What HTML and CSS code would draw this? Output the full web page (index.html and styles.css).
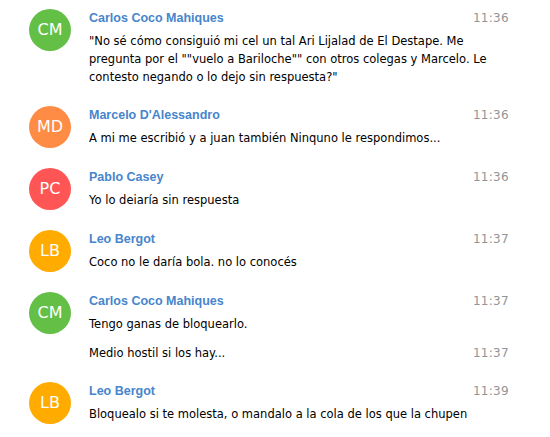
FILE: index.html
```html
<!DOCTYPE html>
<html lang="es">
<head>
    <meta charset="UTF-8">
    <meta name="viewport" content="width=device-width, initial-scale=1.0">
    <title>Mensajes</title>
    <link rel="stylesheet" href="styles.css">
</head>
<body>
    <div class="history">

        <div class="message">
            <div class="userpic userpic-green">CM</div>
            <div class="body">
                <div class="head">
                    <div class="from-name">Carlos Coco Mahiques</div>
                    <div class="details">11:36</div>
                </div>
                <div class="text">"No sé cómo consiguió mi cel un tal Ari Lijalad de El Destape. Me pregunta por el ""vuelo a Bariloche"" con otros colegas y Marcelo. Le contesto negando o lo dejo sin respuesta?"</div>
            </div>
        </div>

        <div class="message">
            <div class="userpic userpic-orange">MD</div>
            <div class="body">
                <div class="head">
                    <div class="from-name">Marcelo D'Alessandro</div>
                    <div class="details">11:36</div>
                </div>
                <div class="text">A mi me escribió y a juan también Ninquno le respondimos...</div>
            </div>
        </div>

        <div class="message">
            <div class="userpic userpic-red">PC</div>
            <div class="body">
                <div class="head">
                    <div class="from-name">Pablo Casey</div>
                    <div class="details">11:36</div>
                </div>
                <div class="text">Yo lo deiaría sin respuesta</div>
            </div>
        </div>

        <div class="message">
            <div class="userpic userpic-yellow">LB</div>
            <div class="body">
                <div class="head">
                    <div class="from-name">Leo Bergot</div>
                    <div class="details">11:37</div>
                </div>
                <div class="text">Coco no le daría bola. no lo conocés</div>
            </div>
        </div>

        <div class="message">
            <div class="userpic userpic-green">CM</div>
            <div class="body">
                <div class="head">
                    <div class="from-name">Carlos Coco Mahiques</div>
                    <div class="details">11:37</div>
                </div>
                <div class="text">Tengo ganas de bloquearlo.</div>
            </div>
        </div>

        <div class="message joined">
            <div class="body">
                <div class="head">
                    <div class="text">Medio hostil si los hay...</div>
                    <div class="details">11:37</div>
                </div>
            </div>
        </div>

        <div class="message">
            <div class="userpic userpic-yellow">LB</div>
            <div class="body">
                <div class="head">
                    <div class="from-name">Leo Bergot</div>
                    <div class="details">11:39</div>
                </div>
                <div class="text">Bloquealo si te molesta, o mandalo a la cola de los que la chupen</div>
            </div>
        </div>

    </div>
</body>
</html>
```

FILE: styles.css
```css
html {
    background-color: #fff;
    color: #000;
    font-family: "DejaVu Sans", "Liberation Sans", sans-serif;
    font-size: 11.5px;
    line-height: 18px;
}

body {
    margin: 0;
    padding: 0;
}

.history {
    margin-top: -1px;
    padding: 0 15px 0 29px;
}

.message {
    display: flex;
    flex-direction: row;
    padding: 10px 0 10px;
}

.message.joined {
    margin-top: -10px;
    padding-left: 60px;
}

.userpic {
    flex: none;
    width: 42px;
    height: 42px;
    border-radius: 50%;
    color: #fff;
    font-size: 16px;
    line-height: 42px;
    text-align: center;
}

.userpic-green {
    background-color: #64bf47;
}

.userpic-orange {
    background-color: #ff8c44;
}

.userpic-red {
    background-color: #ff5555;
}

.userpic-yellow {
    background-color: #ffab00;
}

.body {
    flex: 1;
    min-width: 0;
    margin-left: 18px;
}

.joined .body {
    margin-left: 0;
}

.head {
    display: flex;
    justify-content: space-between;
}

.from-name {
    color: #4785cc;
    font-family: "Liberation Sans", "DejaVu Sans", sans-serif;
    font-size: 12.5px;
    font-weight: bold;
    padding-bottom: 5px;
    white-space: nowrap;
}

.details {
    flex: none;
    color: #919597;
    font-size: 12px;
    letter-spacing: 0.3px;
    padding-right: 26px;
}

.text {
    padding-right: 30px;
    word-wrap: break-word;
}
```
